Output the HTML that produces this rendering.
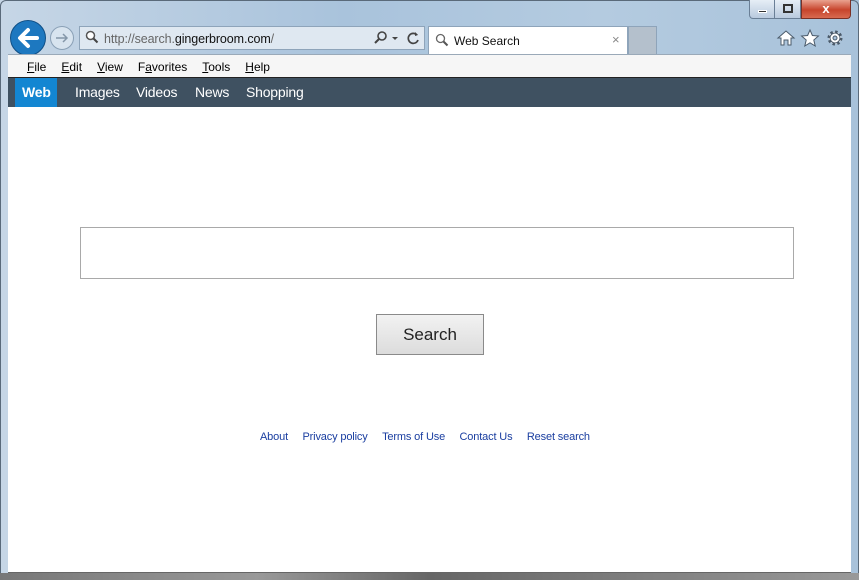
<!DOCTYPE html>
<html><head><style>
*{margin:0;padding:0;box-sizing:border-box}
body{width:859px;height:580px;overflow:hidden;position:relative;font-family:"Liberation Sans",sans-serif;background:linear-gradient(90deg,#c6d6e6,#a9c3dc 40%,#b4cbe0 70%,#a8c2da);}
.a{position:absolute}
.menu span{margin-right:15px;font-size:12px;color:#000}
.nav span{position:absolute;top:6px;font-size:14px;color:#fff;letter-spacing:-0.2px}
.links a{color:#1a3ea0;text-decoration:none;font-size:11px;margin:0 5px;letter-spacing:-0.15px}
</style></head><body>
<div class="a" style="left:0;top:0;width:859px;height:580px;border:1px solid #5a6a7a;border-radius:6px 6px 0 0"></div>
<div class="a" style="left:749px;top:0;width:26px;height:19px;border:1px solid #6a7f96;border-top:none;background:linear-gradient(#e6eef6,#b9cade);border-radius:0 0 0 4px"><div class="a" style="left:8px;top:10px;width:9px;height:3px;background:#333;border:1px solid #fff"></div></div>
<div class="a" style="left:775px;top:0;width:26px;height:19px;border:1px solid #6a7f96;border-top:none;border-left:none;background:linear-gradient(#e6eef6,#b9cade)"><div class="a" style="left:8px;top:4px;width:10px;height:9px;border:2px solid #333"></div></div>
<div class="a" style="left:801px;top:0;width:50px;height:19px;border:1px solid #7a3026;border-top:none;background:linear-gradient(#e9a28f,#c7442c 55%,#d86a50);border-radius:0 0 4px 0;color:#fff;font-weight:bold;font-size:13px;text-align:center;line-height:17px">x</div>
<div class="a" style="left:10px;top:20px;width:36px;height:36px;border-radius:50%;background:#1d78c0;border:1px solid #0f4f86"><svg width="36" height="36" style="position:absolute;left:-1px;top:-1px"><path d="M27 18H11M18 10l-8 8 8 8" stroke="#fff" stroke-width="4" fill="none" stroke-linecap="round" stroke-linejoin="round"/></svg></div>
<div class="a" style="left:50px;top:26px;width:24px;height:24px;border-radius:50%;border:1px solid #8aa0b6;background:#d8e4ef"><svg width="24" height="24" style="position:absolute;left:-1px;top:-1px"><path d="M6 12h11M13 8l4 4-4 4" stroke="#8497a9" stroke-width="1.5" fill="none"/></svg></div>
<div class="a" style="left:79px;top:26px;width:346px;height:24px;background:#dfe8f1;border:1px solid #8ea4ba"></div>
<svg class="a" style="left:85px;top:30px" width="14" height="14"><circle cx="5.5" cy="5.5" r="4" stroke="#555" stroke-width="1.5" fill="#fff"/><path d="M8.5 8.5l4 4" stroke="#444" stroke-width="2"/></svg>
<div class="a" style="left:104px;top:32px;font-size:12.5px;color:#666;letter-spacing:-0.1px">http://search.<span style="color:#111">gingerbroom.com</span>/</div>
<svg class="a" style="left:373px;top:30px" width="50" height="16"><circle cx="9" cy="6" r="4" stroke="#444" stroke-width="1.6" fill="none"/><path d="M6 9l-4 4" stroke="#444" stroke-width="2"/><path d="M19 7h6l-3 3z" fill="#444"/><path d="M44 5a5 5 0 1 0 1 5" stroke="#444" stroke-width="1.7" fill="none"/><path d="M42 2l3 3-3 1z" fill="#444"/></svg>
<div class="a" style="left:428px;top:26px;width:200px;height:28px;background:#fff;border:1px solid #8ea4ba;border-bottom:none"></div>
<svg class="a" style="left:435px;top:33px" width="14" height="14"><circle cx="5.5" cy="5.5" r="4" stroke="#666" stroke-width="1.3" fill="#fff"/><path d="M8.5 8.5l4 4" stroke="#555" stroke-width="2"/></svg>
<div class="a" style="left:454px;top:34px;font-size:12px;color:#111">Web Search</div>
<div class="a" style="left:612px;top:32px;font-size:13px;color:#888">×</div>
<div class="a" style="left:628px;top:26px;width:29px;height:28px;background:#b4c0cc;border:1px solid #8ea4ba;border-bottom:none"></div>
<svg class="a" style="left:776px;top:28px" width="70" height="20"><path d="M2 10L10 3l8 7h-3v7h-3v-5H8v5H5v-7z" fill="#fff" stroke="#4a5a6a" stroke-width="1"/><path d="M34 2l2.4 5.5 6 .5-4.6 4 1.4 6-5.2-3.2-5.2 3.2 1.4-6-4.6-4 6-.5z" fill="#fff" stroke="#4a5a6a" stroke-width="1"/><circle cx="59" cy="10" r="6" fill="#fff" stroke="#4a5a6a" stroke-width="3" stroke-dasharray="2.4 2.3"/><circle cx="59" cy="10" r="5" fill="#fff" stroke="#4a5a6a" stroke-width="1"/><circle cx="59" cy="10" r="2" fill="#a9c3dc" stroke="#4a5a6a"/></svg>
<div class="a menu" style="left:8px;top:54px;width:843px;height:23px;background:#f6f6f6;border-top:1px solid #9aa9b8;padding:3px 0 0 19px"><span><u>F</u>ile</span><span><u>E</u>dit</span><span><u>V</u>iew</span><span>F<u>a</u>vorites</span><span><u>T</u>ools</span><span><u>H</u>elp</span></div>
<div class="a nav" style="left:8px;top:77px;width:843px;height:30px;background:#3f5161;border-top:1px solid #222">
<div class="a" style="left:7px;top:0;width:42px;height:29px;background:#1386d2"></div>
<span style="left:14px;font-weight:bold">Web</span><span style="left:67px">Images</span><span style="left:128px">Videos</span><span style="left:187px">News</span><span style="left:238px">Shopping</span></div>
<div class="a" style="left:8px;top:107px;width:843px;height:466px;background:#fff;border-bottom:1px solid #666"></div>
<div class="a" style="left:80px;top:227px;width:714px;height:52px;border:1px solid #a9a9a9"></div>
<div class="a" style="left:376px;top:314px;width:108px;height:41px;border:1px solid #8a8a8a;background:linear-gradient(#f2f2f2,#dcdcdc);font-size:17px;color:#222;text-align:center;line-height:39px">Search</div>
<div class="a links" style="left:255px;top:427px;white-space:nowrap"><a>About</a> <a>Privacy policy</a> <a>Terms of Use</a> <a>Contact Us</a> <a>Reset search</a></div>
<div class="a" style="left:0;top:573px;width:859px;height:7px;background:linear-gradient(90deg,#777,#999 30%,#666 50%,#999)"></div>
</body></html>
